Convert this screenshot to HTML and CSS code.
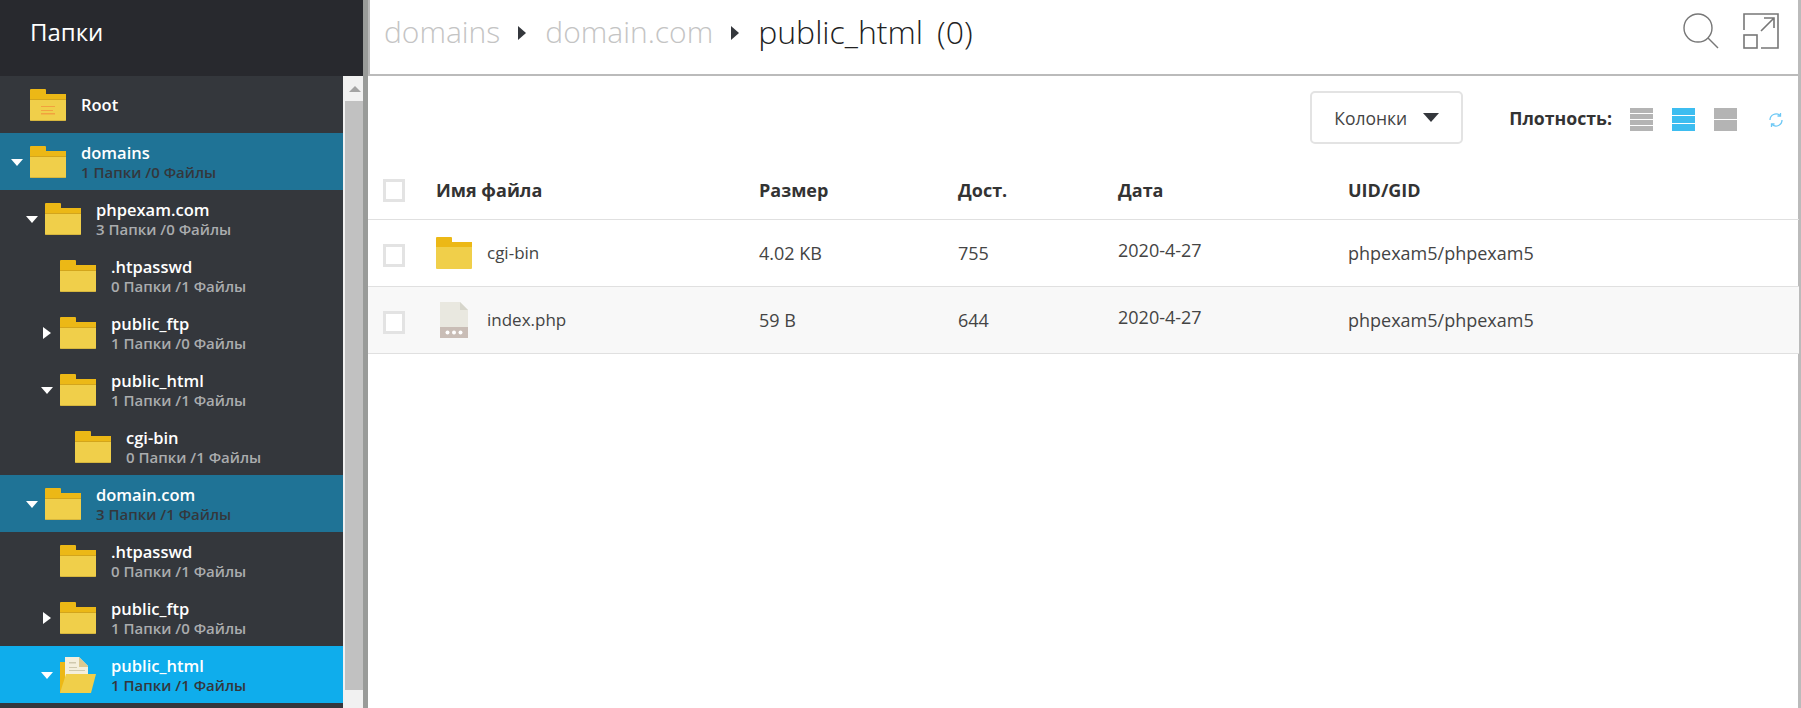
FILE: index.html
```html
<!DOCTYPE html>
<html lang="ru">
<head>
<meta charset="utf-8">
<title>Файлы</title>
<link rel="stylesheet" href="styles.css">
</head>
<body>
<svg class="defs" width="0" height="0" aria-hidden="true">
  <symbol id="folder" viewBox="0 0 36 32">
    <path d="M0 1a1 1 0 0 1 1-1h14a1 1 0 0 1 1 1v4h20v6H0z" fill="#ecb816"/>
    <rect y="10" width="36" height="1" fill="#d3a51c"/>
    <path d="M0 11h36v20a1 1 0 0 1-1 1H1a1 1 0 0 1-1-1z" fill="#f0cf4a"/>
    <rect y="31" x="1" width="34" height="1" fill="#d6b63e"/>
  </symbol>
  <symbol id="folder-plain" viewBox="0 0 36 32">
    <path d="M0 1a1 1 0 0 1 1-1h14a1 1 0 0 1 1 1v4h20v6H0z" fill="#ecb816"/>
    <path d="M0 10h36v21a1 1 0 0 1-1 1H1a1 1 0 0 1-1-1z" fill="#f0cf4a"/>
  </symbol>
</svg>

<div class="sidebar">
  <div class="side-head">Папки</div>
  <div class="side-body">
    <div class="tree">
      <div class="row d0">
        <span class="caret"></span>
        <svg class="folder" viewBox="0 0 36 32"><use href="#folder"/><path d="M11 17h14v1H11zM11 21h12v1H11zM11 24h14v1.500H11z" fill="#f2a23e"/></svg>
        <div class="label"><div class="name">Root</div></div>
      </div>
      <div class="row d0 active">
        <span class="caret down"></span>
        <svg class="folder"><use href="#folder"/></svg>
        <div class="label"><div class="name">domains</div><div class="sub">1 Папки /0 Файлы</div></div>
      </div>
      <div class="row d1">
        <span class="caret down"></span>
        <svg class="folder"><use href="#folder"/></svg>
        <div class="label"><div class="name">phpexam.com</div><div class="sub">3 Папки /0 Файлы</div></div>
      </div>
      <div class="row d2">
        <span class="caret"></span>
        <svg class="folder"><use href="#folder"/></svg>
        <div class="label"><div class="name">.htpasswd</div><div class="sub">0 Папки /1 Файлы</div></div>
      </div>
      <div class="row d2">
        <span class="caret right"></span>
        <svg class="folder"><use href="#folder"/></svg>
        <div class="label"><div class="name">public_ftp</div><div class="sub">1 Папки /0 Файлы</div></div>
      </div>
      <div class="row d2">
        <span class="caret down"></span>
        <svg class="folder"><use href="#folder"/></svg>
        <div class="label"><div class="name">public_html</div><div class="sub">1 Папки /1 Файлы</div></div>
      </div>
      <div class="row d3">
        <span class="caret"></span>
        <svg class="folder"><use href="#folder"/></svg>
        <div class="label"><div class="name">cgi-bin</div><div class="sub">0 Папки /1 Файлы</div></div>
      </div>
      <div class="row d1 active">
        <span class="caret down"></span>
        <svg class="folder"><use href="#folder"/></svg>
        <div class="label"><div class="name">domain.com</div><div class="sub">3 Папки /1 Файлы</div></div>
      </div>
      <div class="row d2">
        <span class="caret"></span>
        <svg class="folder"><use href="#folder"/></svg>
        <div class="label"><div class="name">.htpasswd</div><div class="sub">0 Папки /1 Файлы</div></div>
      </div>
      <div class="row d2">
        <span class="caret right"></span>
        <svg class="folder"><use href="#folder"/></svg>
        <div class="label"><div class="name">public_ftp</div><div class="sub">1 Папки /0 Файлы</div></div>
      </div>
      <div class="row d2 current">
        <span class="caret down"></span>
        <svg class="folder open" viewBox="0 0 36 36">
          <rect y="5" width="7" height="31" fill="#ecb816"/>
          <path d="M5 0h14l9 9v12H5z" fill="#f4efdc"/>
          <path d="M19 0l9 9v1h-9z" fill="#dcc98f"/>
          <path d="M9 5h7v1.500H9zM9 10h8v1H9zM9 13h16v1H9z" fill="#cfc9ae"/>
          <path d="M6 17h30l-5 19H0z" fill="#f0cf4a"/>
        </svg>
        <div class="label"><div class="name">public_html</div><div class="sub">1 Папки /1 Файлы</div></div>
      </div>
    </div>
    <div class="scrollbar">
      <div class="scroll-up"><span class="scroll-arrow"></span></div>
      <div class="scroll-thumb"></div>
      <div class="scroll-end"></div>
    </div>
  </div>
</div>

<div class="main">
  <div class="topbar">
    <div class="crumbs">
      <span class="crumb">domains</span><span class="sep"></span>
      <span class="crumb">domain.com</span><span class="sep"></span>
      <span class="crumb-now">public_html</span><span class="count">(0)</span>
    </div>
    <div class="top-icons">
      <svg class="icon-search" width="36" height="36" viewBox="0 0 36 36" fill="none" stroke="#777" stroke-width="1.400">
        <circle cx="15" cy="15" r="14"/>
        <path d="M25 25l10 10"/>
      </svg>
      <svg class="icon-expand" width="36" height="36" viewBox="0 0 36 36" fill="none" stroke="#777" stroke-width="1.600">
        <rect x="1" y="22" width="13" height="13"/>
        <path d="M1 17V1h34v34H18M18 18L31 5M21 5h10v10"/>
      </svg>
    </div>
  </div>

  <div class="toolbar">
    <button class="columns-btn">Колонки<span class="btn-caret"></span></button>
    <span class="density-label">Плотность:</span>
    <div class="density">
      <span class="bars b4"><i></i><i></i><i></i><i></i></span>
      <span class="bars b3 on"><i></i><i></i><i></i></span>
      <span class="bars b2"><i></i><i></i></span>
    </div>
    <svg class="refresh" width="14" height="16" viewBox="0 0 14 16" fill="none" stroke="#6cc8f5" stroke-width="1.300">
      <path d="M1 8a6 6 0 0 1 10-4.500M13 8a6 6 0 0 1-10 4.500"/>
      <path d="M11.500 1v3h-3M2.500 15v-3h3"/>
    </svg>
  </div>

  <div class="grid head">
    <span class="check"></span>
    <span>Имя файла</span><span>Размер</span><span>Дост.</span><span>Дата</span><span>UID/GID</span>
  </div>
  <div class="grid item">
    <span class="check"></span>
    <span class="file"><svg class="folder"><use href="#folder-plain"/></svg><span class="file-name">cgi-bin</span></span>
    <span>4.02 KB</span><span>755</span><span class="date">2020-4-27</span><span>phpexam5/phpexam5</span>
  </div>
  <div class="grid item alt">
    <span class="check"></span>
    <span class="file">
      <svg class="doc" width="28" height="36" viewBox="0 0 28 36">
        <path d="M0 0h20l8 8v18H0z" fill="#e9e8e0"/>
        <path d="M20 0l8 8h-8z" fill="#d6d5cb"/>
        <rect y="25" width="28" height="11" fill="#c9bdb6"/>
        <circle cx="7.500" cy="30.500" r="2" fill="#fff"/><circle cx="14" cy="30.500" r="2" fill="#fff"/><circle cx="20.500" cy="30.500" r="2" fill="#fff"/>
      </svg>
      <span class="file-name">index.php</span>
    </span>
    <span>59 B</span><span>644</span><span class="date">2020-4-27</span><span>phpexam5/phpexam5</span>
  </div>
</div>
</body>
</html>
```
FILE: styles.css
```css
* { box-sizing: border-box; }
html, body { height: 100%; }
body {
  margin: 0;
  display: flex;
  height: 708px;
  overflow: hidden;
  font-family: "Open Sans", "Noto Sans", sans-serif;
  color: #444;
  background: #fff;
}
.defs { display: block; width: 0; height: 0; overflow: hidden; flex: none; }

.sidebar {
  width: 368px;
  flex: none;
  display: flex;
  flex-direction: column;
  border-right: 5px solid #999b99;
}
.side-head {
  height: 76px;
  flex: none;
  background: #28292e;
  color: #fff;
  font-size: 24px;
  line-height: 64px;
  padding-left: 30px;
}
.side-body { flex: 1; display: flex; min-height: 0; }
.tree { flex: 1; background: #34373c; }
.row {
  height: 57px;
  display: flex;
  align-items: center;
}
.d0 { padding-left: 11px; }
.d1 { padding-left: 26px; }
.d2 { padding-left: 41px; }
.d3 { padding-left: 56px; }
.active { background: #1f7396; }
.current { background: #0fadec; }
.caret { width: 19px; flex: none; display: flex; }
.caret.down::before {
  content: "";
  margin-top: 1px;
  border-left: 6px solid transparent;
  border-right: 6px solid transparent;
  border-top: 7px solid #fff;
}
.caret.right::before {
  content: "";
  margin-left: 2px;
  border-top: 6px solid transparent;
  border-bottom: 6px solid transparent;
  border-left: 8px solid #fff;
}
.folder { width: 36px; height: 32px; flex: none; }
.folder.open { height: 36px; }
.label { margin-left: 15px; }
.name { font-size: 16.5px; font-weight: 600; line-height: 20px; color: #fff; }
.name:not(:only-child) { margin-top: 2px; }
.sub { font-size: 15px; font-weight: 600; line-height: 20px; margin-top: -1px; color: #aaacae; }
.active .sub, .current .sub { color: #34373c; }

.scrollbar {
  width: 20px;
  flex: none;
  display: flex;
  flex-direction: column;
  background: #f1f1f1;
}
.scroll-up {
  height: 25px;
  flex: none;
  display: flex;
  align-items: center;
  justify-content: center;
  padding-left: 3px;
}
.scroll-arrow {
  border-left: 6px solid transparent;
  border-right: 6px solid transparent;
  border-bottom: 6px solid #a3a3a3;
}
.scroll-thumb { flex: 1; margin-left: 2px; background: #c1c1c1; }
.scroll-end { height: 18px; flex: none; }

.main {
  flex: 1;
  min-width: 0;
  display: flex;
  flex-direction: column;
  border-right: 3px solid #bbb;
}
.topbar {
  height: 76px;
  flex: none;
  display: flex;
  align-items: center;
  justify-content: space-between;
  border-left: 2px solid #bbb;
  border-bottom: 2px solid #bbb;
  padding: 0 19px 12px 14px;
}
.crumbs { display: flex; align-items: center; font-size: 30px; font-weight: 300; }
.crumb { color: #c4c4c4; }
.crumb-now { color: #222; font-size: 32px; }
.count { color: #222; font-size: 32px; margin-left: 14px; }
.sep {
  margin: 4px 19px 0 18px;
  border-top: 7px solid transparent;
  border-bottom: 7px solid transparent;
  border-left: 8px solid #34373c;
}
.top-icons { display: flex; align-items: center; gap: 24px; }
.icon-search, .icon-expand { display: block; }

.toolbar {
  height: 68px;
  flex: none;
  display: flex;
  align-items: flex-end;
  justify-content: flex-end;
  padding-right: 15px;
}
.columns-btn {
  width: 153px;
  height: 53px;
  display: flex;
  align-items: center;
  justify-content: center;
  gap: 16px;
  background: #fff;
  border: 2px solid #e3e3e3;
  border-radius: 5px;
  font: 400 17.5px "Open Sans", sans-serif;
  color: #444;
  padding: 0;
}
.btn-caret {
  border-left: 8px solid transparent;
  border-right: 8px solid transparent;
  border-top: 9px solid #34373c;
}
.density-label {
  margin-left: 46px;
  height: 53px;
  line-height: 55px;
  font-size: 17.7px;
  font-weight: 700;
  color: #333;
}
.density { display: flex; gap: 19px; margin-left: 18px; height: 36px; }
.bars { width: 23px; height: 23px; display: flex; flex-direction: column; gap: 1px; }
.bars i { flex: 1; background: #b4b4b4; }
.bars.on i { background: #3dbdf0; }
.refresh { margin-left: 32px; margin-bottom: 16px; }

.grid {
  display: grid;
  grid-template-columns: 53px 323px 199px 160px 230px 1fr;
  align-items: center;
  padding-left: 15px;
  margin-right: -1px;
  font-size: 18px;
  border-bottom: 1px solid #e0e0e0;
}
.head { height: 76px; padding-top: 17px; font-weight: 700; color: #333; }
.item { height: 67px; }
.alt { background: #f8f8f8; }
.check {
  width: 22px;
  height: 23px;
  background: #fff;
  border: 3px solid #e3e3e3;
}
.item .check { margin-top: 4px; }
.file { display: flex; align-items: center; }
.file-name { margin: 0 0 2px 15px; font-size: 17px; }
.doc { margin: 0 4px; flex: none; }
.date { margin-bottom: 6px; }
```
